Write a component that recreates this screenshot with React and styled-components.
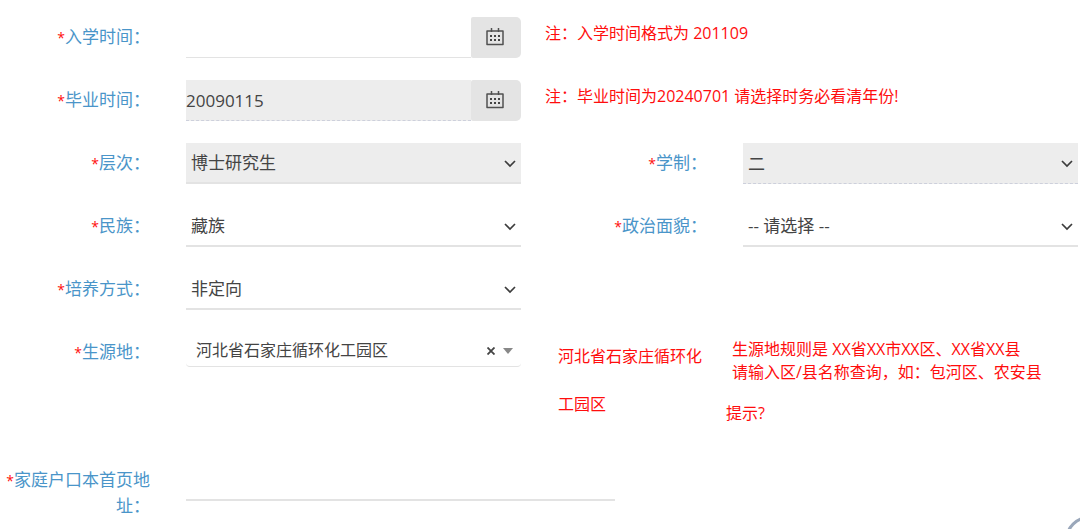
import React, { useState } from "react";
import styled, { createGlobalStyle } from "styled-components";

const COLORS = {
  label: "#4a95c9",
  text: "#444",
  danger: "#ff0d0d",
  disabled: "#ededed",
  addon: "#e4e4e4",
  line: "#e3e3e3",
  dashed: "#cdd0dc"
};

const GlobalStyle = createGlobalStyle`
  *, *::before, *::after {
    box-sizing: border-box;
  }

  body {
    margin: 0;
    background-color: #fff;
    color: ${COLORS.text};
    font-family: "Open Sans", "Noto Sans CJK SC", sans-serif;
    font-size: 17px;
  }

  input, select, button {
    font: inherit;
    color: inherit;
  }
`;

const Form = styled.form`
  display: flex;
  flex-direction: column;
  gap: 22px;
  padding: 17px 2px 28px 0;
`;

const Row = styled.div`
  display: grid;
  grid-template-columns:
    minmax(0, 186fr) minmax(0, 335fr) minmax(0, 222fr)
    minmax(0, 335fr);
  align-items: start;
`;

const Label = styled.label`
  padding: 7px 36px 0 0;
  line-height: 25px;
  text-align: right;
  color: ${COLORS.label};

  &::before {
    content: "*";
    font-size: 14px;
    color: ${COLORS.danger};
  }
`;

const InputGroup = styled.div`
  display: flex;
  height: 41px;
`;

const Input = styled.input`
  flex: 1;
  min-width: 0;
  height: 41px;
  padding: 0;
  border: 0;
  border-bottom: 1px solid ${COLORS.line};
  border-radius: 0;
  background-color: transparent;
  outline: none;

  &:read-only {
    border-bottom: 1px dashed ${COLORS.dashed};
    background-color: ${COLORS.disabled};
  }
`;

const AddressInput = styled(Input)`
  grid-column: 2 / span 2;
  width: 77%;
  border-bottom-width: 2px;
`;

const Addon = styled.button`
  display: flex;
  align-items: center;
  justify-content: center;
  width: 50px;
  padding: 0 2px 2px 0;
  border: 0;
  border-radius: 2px 5px 5px 2px;
  background-color: ${COLORS.addon};
`;

const SelectBox = styled.div`
  position: relative;
`;

const Select = styled.select`
  display: block;
  width: 100%;
  height: 41px;
  padding: 0 28px 0 5px;
  border: 0;
  border-bottom: ${props => (props.$dashed ? "1px dashed" : "2px solid")}
    ${props => (props.$dashed ? COLORS.dashed : COLORS.line)};
  border-radius: 0;
  background-color: transparent;
  appearance: none;
  outline: none;

  &:disabled {
    background-color: ${COLORS.disabled};
    color: ${COLORS.text};
    opacity: 1;
  }
`;

const Chevron = styled.svg`
  position: absolute;
  top: 16px;
  right: 5px;
  pointer-events: none;
`;

const SearchSelect = styled.select`
  display: block;
  width: 100%;
  height: 35px;
  padding: 1px 48px 0 10px;
  border: 0;
  border-bottom: 1px solid ${COLORS.line};
  border-radius: 4px;
  background-color: transparent;
  font-size: 16px;
  appearance: none;
  outline: none;
`;

const SearchTools = styled.div`
  position: absolute;
  top: 12px;
  right: 8px;
  display: flex;
  align-items: center;
  gap: 8px;
  height: 14px;
  pointer-events: none;
`;

const ClearButton = styled.button`
  display: flex;
  padding: 0;
  border: 0;
  background: none;
  pointer-events: auto;
`;

const Note = styled.div`
  grid-column: 3 / span 2;
  padding-left: 24px;
  font-size: 16px;
  line-height: 32px;
  color: ${COLORS.danger};
`;

const Origin = styled.div`
  grid-column: 3 / span 2;
  display: flex;
  align-items: flex-start;
  gap: 24px;
  padding: 0 0 10px 37px;
  font-size: 16px;
  color: ${COLORS.danger};
`;

const Chosen = styled.div`
  flex: 0 0 144px;
  line-height: 48px;
`;

const Rules = styled.div`
  padding-top: 6px;
  padding-left: 6px;
  line-height: 23px;
`;

const Tip = styled.a`
  display: block;
  margin: 18px 0 0 -6px;
  color: inherit;
  text-decoration: none;
`;

const Floating = styled.button`
  position: fixed;
  right: -33px;
  bottom: -35px;
  width: 48px;
  height: 48px;
  border: 3px solid #9aa7ba;
  border-radius: 50%;
  background-color: #fff;
`;

const CalendarIcon = () => (
  <svg width="18" height="18" viewBox="0 0 18 18" fill="none" aria-hidden="true">
    <path
      d="M1 3h16v13.5H1zM5.5 0v4M12.5 0v4"
      stroke="#505050"
      strokeWidth="1.5"
      strokeLinejoin="round"
    />
    <path
      d="M4 8h2M8 8h2M12 8h2M4 12h2M8 12h2M12 12h2"
      stroke="#444"
      strokeWidth="2"
    />
  </svg>
);

const SelectField = ({ id, label, options, ...rest }) => (
  <>
    <Label htmlFor={id}>{label}：</Label>
    <SelectBox>
      <Select id={id} {...rest}>
        {options.map(option => (
          <option key={option}>{option}</option>
        ))}
      </Select>
      <Chevron width="12" height="10" viewBox="0 0 12 10" fill="none">
        <path d="M1 2l5 5 5-5" stroke="#3c3c3c" strokeWidth="1.7" />
      </Chevron>
    </SelectBox>
  </>
);

const DateField = ({ id, label, note, ...rest }) => (
  <Row>
    <Label htmlFor={id}>{label}：</Label>
    <InputGroup>
      <Input id={id} type="text" {...rest} />
      <Addon type="button" aria-label={label}>
        <CalendarIcon />
      </Addon>
    </InputGroup>
    <Note>{note}</Note>
  </Row>
);

const App = () => {
  const [origin, setOrigin] = useState("河北省石家庄循环化工园区");

  return (
    <>
      <GlobalStyle />
      <Form>
        <DateField id="enter" label="入学时间" note="注：入学时间格式为 201109" />
        <DateField
          id="graduate"
          label="毕业时间"
          note="注：毕业时间为20240701 请选择时务必看清年份!"
          defaultValue="20090115"
          readOnly
        />
        <Row>
          <SelectField id="level" label="层次" options={["博士研究生"]} disabled />
          <SelectField id="years" label="学制" options={["二"]} disabled $dashed />
        </Row>
        <Row>
          <SelectField id="nation" label="民族" options={["藏族"]} />
          <SelectField id="politics" label="政治面貌" options={["-- 请选择 --"]} />
        </Row>
        <Row>
          <SelectField id="training" label="培养方式" options={["非定向"]} />
        </Row>
        <Row>
          <Label htmlFor="origin">生源地：</Label>
          <SelectBox>
            <SearchSelect
              id="origin"
              value={origin}
              onChange={e => setOrigin(e.target.value)}
            >
              <option value="" />
              <option>河北省石家庄循环化工园区</option>
            </SearchSelect>
            <SearchTools>
              <ClearButton
                type="button"
                aria-label="清除"
                onClick={() => setOrigin("")}
              >
                <svg width="8" height="8" viewBox="0 0 8 8">
                  <path d="M0.5 0.5l7 7M7.5 0.5l-7 7" stroke="#444" strokeWidth="1.8" />
                </svg>
              </ClearButton>
              <svg width="10" height="6" viewBox="0 0 10 6">
                <path d="M0 0h10L5 6z" fill="#888" />
              </svg>
            </SearchTools>
          </SelectBox>
          <Origin>
            <Chosen>{origin}</Chosen>
            <Rules>
              生源地规则是 XX省XX市XX区、XX省XX县
              <br />
              请输入区/县名称查询，如：包河区、农安县
              <Tip href="#tip">提示?</Tip>
            </Rules>
          </Origin>
        </Row>
        <Row>
          <Label htmlFor="address">家庭户口本首页地址：</Label>
          <AddressInput id="address" type="text" />
        </Row>
      </Form>
      <Floating type="button" aria-label="更多" />
    </>
  );
};

export default App;
